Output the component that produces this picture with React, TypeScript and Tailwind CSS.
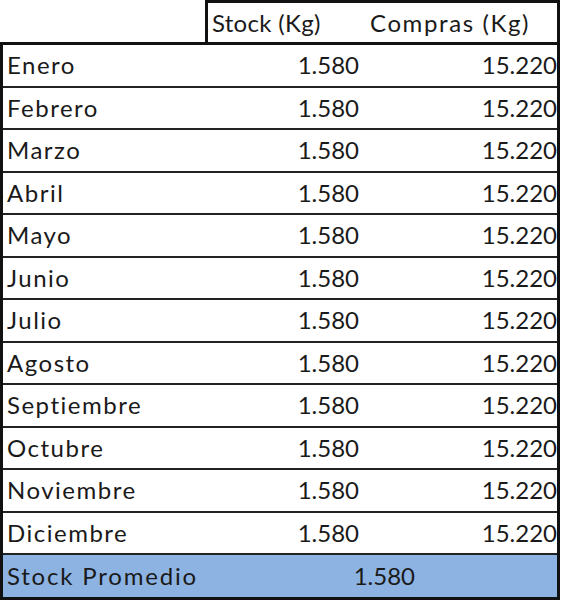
const months = [
    "Enero", "Febrero", "Marzo", "Abril", "Mayo", "Junio",
    "Julio", "Agosto", "Septiembre", "Octubre", "Noviembre", "Diciembre",
]

const App = () => {
    return (
        <div className="w-[563px] h-[600px] bg-white text-[#1a1a1a] font-['Lato','Liberation_Sans',sans-serif] text-[24px] leading-none">
            {/* encabezado */}
            <div className="flex h-[42px]">
                <div className="w-[205px]"/>
                <div className="flex w-[355px] border-l-[3px] border-t-[3px] border-r-[3px] border-[#111]">
                    <div className="flex items-center w-[157px] pl-[4px] tracking-[0.3px]">Stock (Kg)</div>
                    <div className="flex items-center pl-[5px] tracking-[1.6px]">Compras (Kg)</div>
                </div>
            </div>

            {/* meses */}
            <div className="w-[560px] border-l-[3px] border-r-[3px] border-t-[3px] border-[#111]">
                {months.map((m, index) => (
                    <div key={index}
                         className="grid grid-cols-[200px_157px_1fr] h-[42.5px] border-b-2 border-[#222] items-center">
                        <div className="pl-[4px] tracking-[1.5px]">{m}</div>
                        <div className="text-right pr-[1px]">1.580</div>
                        <div className="text-right">15.220</div>
                    </div>
                ))}
                <div className="grid grid-cols-[200px_157px_1fr] h-[45px] items-center bg-[#8db3e2] border-b-[3px] border-[#111]">
                    <div className="pl-[4px] tracking-[1.8px]">Stock Promedio</div>
                    <div className="text-right translate-x-[55px]">1.580</div>
                    <div/>
                </div>
            </div>
        </div>
    )
}

export default App
